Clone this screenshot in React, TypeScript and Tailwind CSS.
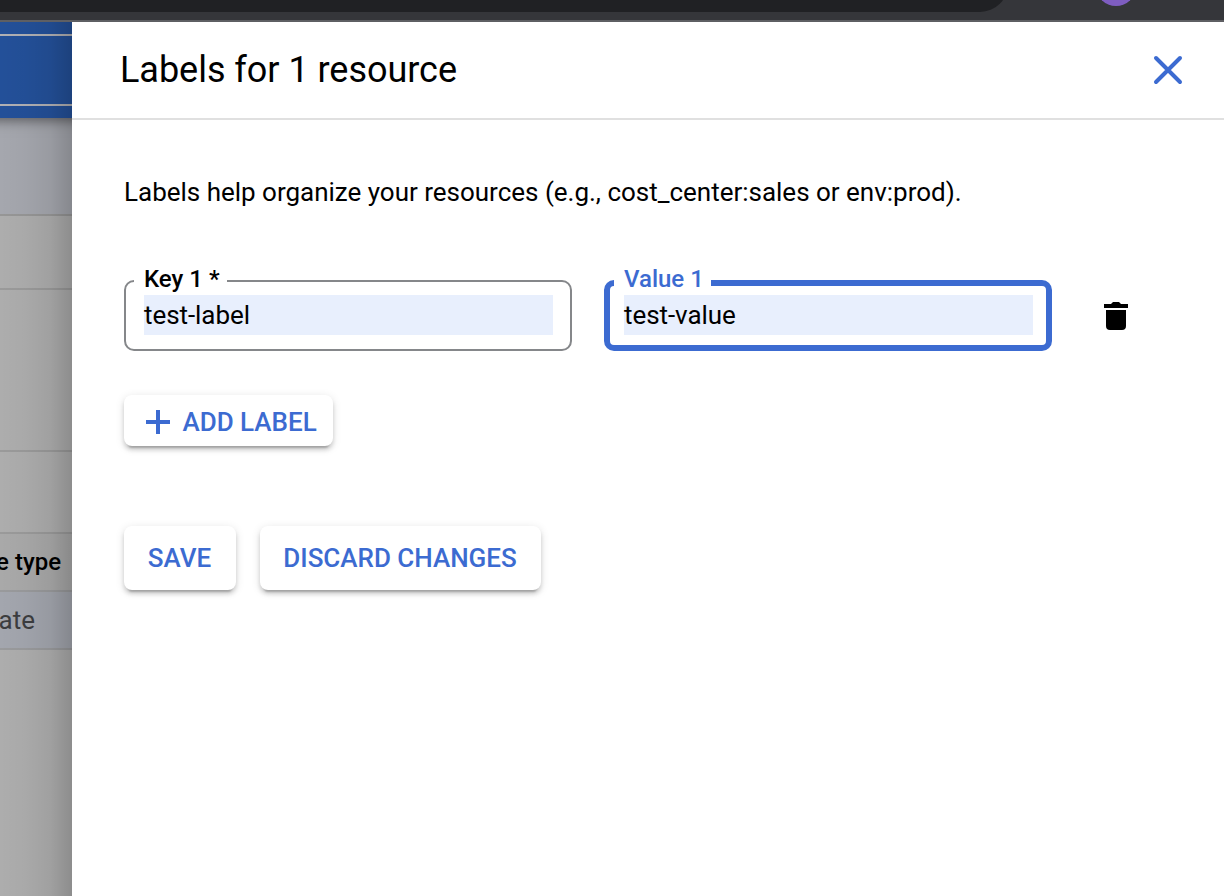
import React from "react";

const raised =
  "flex shrink-0 items-center rounded-lg bg-white text-[26px] font-medium tracking-[-0.015px] text-[#3c6bd1] shadow-[0_6px_2px_-4px_rgba(0,0,0,0.2),0_4px_4px_0_rgba(0,0,0,0.14),0_2px_10px_0_rgba(0,0,0,0.12)]";

function BrowserBar() {
  return (
    <div className="relative flex h-[22px] shrink-0 overflow-hidden border-b-2 border-[#5e5f63] bg-[#35363a]">
      <div className="-mt-12 h-[60px] w-[1008px] rounded-br-[28px] bg-[#202124]" />
      <div className="absolute left-[1096px] top-[-34px] size-10 rounded-full bg-[#7e5dc0]" />
    </div>
  );
}

function Background() {
  return (
    <aside className="relative flex w-[72px] shrink-0 flex-col overflow-hidden whitespace-nowrap bg-[#adadad]">
      <div className="relative z-10 -ml-5 flex h-24 w-[112px] shrink-0 flex-col bg-[#235099] py-3 shadow-[0_2px_12px_rgba(0,0,0,0.5)]">
        <div className="h-[72px] border-y-2 border-[#b0b0b4]" />
      </div>
      <div className="h-[98px] shrink-0 border-b-2 border-[#969696] bg-[#a5a7ae]" />
      <div className="h-[74px] shrink-0 border-b-2 border-[#9a9a9a]" />
      <div className="h-[162px] shrink-0 border-b-2 border-[#9a9a9a]" />
      <div className="h-[82px] shrink-0 border-b-2 border-[#9a9a9a]" />
      <div className="flex h-[58px] shrink-0 items-center justify-end border-b-2 border-[#999a9c] bg-[#a9a9a9] pr-[11px] text-[24px] font-medium text-black">
        e type
      </div>
      <div className="flex h-[58px] shrink-0 items-center justify-end border-b-2 border-[#999a9c] bg-[#a3a6ae] pr-[37px] text-[26px] text-[#3c3d3f]">
        ate
      </div>
      <div className="pointer-events-none absolute inset-0 z-20 bg-[linear-gradient(to_right,rgba(0,0,0,0)_0%,rgba(0,0,0,0.025)_35%,rgba(0,0,0,0.075)_70%,rgba(0,0,0,0.19)_100%)]" />
    </aside>
  );
}

function Field({ label, value, active = false }: { label: string; value: string; active?: boolean }) {
  return (
    <div
      className={
        active
          ? "relative flex h-[71px] w-[448px] rounded-[10px] border-[6px] border-[#3c6bd1] pl-[14px] pt-[9px]"
          : "relative flex h-[71px] w-[448px] rounded-[10px] border-2 border-[#85878a] pl-[18px] pt-[13px]"
      }
    >
      <span
        className={
          active
            ? "absolute left-1 top-[-21px] w-[97px] bg-white pl-[10px] text-[24px] font-medium leading-[28px] text-[#3c6bd1]"
            : "absolute left-2 top-[-17px] w-[93px] bg-white pl-[10px] text-[24px] font-medium leading-[28px] text-black"
        }
      >
        {label}
      </span>
      <div className="h-10 w-[409px] bg-[#e8effd] text-[26px] leading-[40px] tracking-[-0.06px] text-black">{value}</div>
    </div>
  );
}

export default function App() {
  return (
    <div className="flex h-[896px] w-[1224px] flex-col overflow-hidden bg-white font-['Roboto',sans-serif]">
      <BrowserBar />
      <div className="flex min-h-0 flex-1">
        <Background />
        <main className="flex flex-1 flex-col bg-white">
          <header className="flex h-[98px] shrink-0 items-center justify-between border-b-2 border-[#e0e0e0] pl-12 pr-[41px]">
            <h1 className="text-[36px] leading-[48px] tracking-[-0.03px] text-black">Labels for 1 resource</h1>
            <button aria-label="Close">
              <svg width="30" height="30" viewBox="0 0 30 30" fill="none" stroke="#3c6bd1" strokeWidth="4">
                <path d="M3 3 27 27M27 3 3 27" strokeLinecap="round" />
              </svg>
            </button>
          </header>
          <section className="flex flex-col items-start pl-[52px] pt-[52px]">
            <p className="text-[26px] leading-[40px] tracking-[-0.01px] text-black">
              Labels help organize your resources (e.g., cost_center:sales or env:prod).
            </p>
            <div className="mt-[68px] flex items-center">
              <Field label="Key 1 *" value="test-label" />
              <div className="w-8" />
              <Field label="Value 1" value="test-value" active />
              <button aria-label="Delete label" className="ml-[52px]">
                <svg width="24" height="28" viewBox="0 0 24 28" fill="black">
                  <path d="M0 2h7l2-2h6l2 2h7v4H0zM2 8h20v16a4 4 0 0 1-4 4H6a4 4 0 0 1-4-4z" />
                </svg>
              </button>
            </div>
            <button className={`${raised} mt-11 h-[51px] w-[209px] gap-[12.5px] pl-[22px] pt-[3px]`}>
              <svg width="24" height="24" viewBox="0 0 24 24" fill="none" stroke="#3c6bd1" strokeWidth="4">
                <path d="M12 0v24M0 12h24" />
              </svg>
              <span>ADD LABEL</span>
            </button>
            <div className="mt-20 flex gap-6">
              <button className={`${raised} h-16 w-28 justify-center pr-px`}>SAVE</button>
              <button className={`${raised} h-16 w-[281px] justify-center pr-px`}>DISCARD CHANGES</button>
            </div>
          </section>
        </main>
      </div>
    </div>
  );
}
